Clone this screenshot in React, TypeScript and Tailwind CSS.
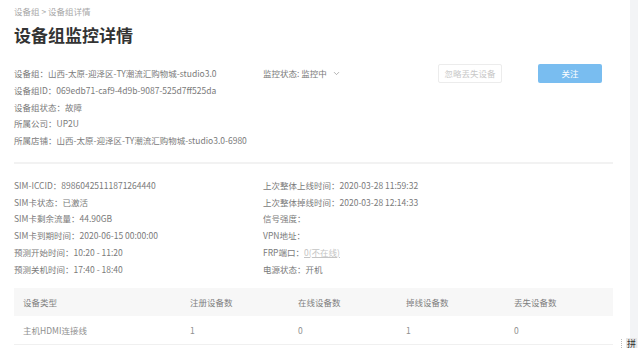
import { ChevronDown } from "lucide-react";

const groupInfo = [
  ["设备组", "山西-太原-迎泽区-TY潮流汇购物城-studio3.0"],
  ["设备组ID", "069edb71-caf9-4d9b-9087-525d7ff525da"],
  ["设备组状态", "故障"],
  ["所属公司", "UP2U"],
  ["所属店铺", "山西-太原-迎泽区-TY潮流汇购物城-studio3.0-6980"],
];

const simInfo = [
  ["SIM-ICCID", "89860425111871264440"],
  ["SIM卡状态", "已激活"],
  ["SIM卡剩余流量", "44.90GB"],
  ["SIM卡到期时间", "2020-06-15 00:00:00"],
  ["预测开始时间", "10:20 - 11:20"],
  ["预测关机时间", "17:40 - 18:40"],
];

const netInfo = [
  ["上次整体上线时间", "2020-03-28 11:59:32"],
  ["上次整体掉线时间", "2020-03-28 12:14:33"],
  ["信号强度", ""],
  ["VPN地址", ""],
  ["FRP端口", "frp"],
  ["电源状态", "开机"],
];

const columns = ["设备类型", "注册设备数", "在线设备数", "掉线设备数", "丢失设备数"];
const rows = [["主机HDMI连接线", "1", "0", "1", "0"]];

function Row({ label, value }: { label: string; value: string }) {
  return (
    <p className="h-[16.75px] leading-[16.75px] whitespace-nowrap">
      {label}：
      {value === "frp" ? (
        <span className="text-[#c4c4c4] underline">0(不在线)</span>
      ) : (
        value
      )}
    </p>
  );
}

export default function App() {
  return (
    <div
      className="relative w-[638px] h-[348px] overflow-hidden flex bg-white text-[8.5px] text-[#7a7a7a]"
      style={{ fontFamily: '"Noto Sans CJK SC", "Noto Sans", sans-serif' }}
    >
      <main className="flex-1 pl-[14px] pr-[17px]">
        <p className="mt-[5px] leading-[12px] text-[#a8a8a8]">设备组 &gt; 设备组详情</p>
        <h1 className="mt-[8px] text-[17px] leading-[20px] font-bold text-[#333]">设备组监控详情</h1>

        <section className="mt-[20px] flex items-start">
          <div className="w-[249px]">
            {groupInfo.map(([l, v]) => (
              <Row key={l} label={l} value={v} />
            ))}
          </div>
          <div className="w-[175px] flex items-center gap-[5px] h-[16.75px] leading-[16.75px] whitespace-nowrap">
            监控状态: 监控中
            <ChevronDown size={9} className="text-[#999]" />
          </div>
          <button className="mt-[-1px] w-[64px] h-[19px] rounded-[2px] border border-[#ececec] bg-white text-[8.5px] text-[#c8c8c8]">
            忽略丢失设备
          </button>
          <button className="mt-[-1px] ml-[36px] w-[64px] h-[19px] rounded-[2px] bg-[#79bdf0] text-[8.5px] text-white">
            关注
          </button>
        </section>

        <div className="mt-[13px] h-[2px] bg-[#f2f2f2]" />

        <section className="mt-[13px] flex">
          <div className="w-[249px]">
            {simInfo.map(([l, v]) => (
              <Row key={l} label={l} value={v} />
            ))}
          </div>
          <div>
            {netInfo.map(([l, v]) => (
              <Row key={l} label={l} value={v} />
            ))}
          </div>
        </section>

        <table className="mt-[11px] w-full table-fixed text-left">
          <colgroup>
            <col className="w-[167px]" />
            <col className="w-[108px]" />
            <col className="w-[108px]" />
            <col className="w-[108px]" />
            <col />
          </colgroup>
          <thead>
            <tr className="h-[28px] bg-[#f7f7f7]">
              {columns.map((c) => (
                <th key={c} className="pl-[9px] font-normal text-[#808080]">
                  {c}
                </th>
              ))}
            </tr>
          </thead>
          <tbody>
            {rows.map((r) => (
              <tr key={r[0]} className="h-[28px] border-b border-[#f0f0f0]">
                {r.map((c, i) => (
                  <td key={i} className="pl-[9px] text-[#8f8f8f]">
                    {c}
                  </td>
                ))}
              </tr>
            ))}
          </tbody>
        </table>
      </main>
      <aside className="w-[8px] bg-[#f3f4f6]" />

      <div className="absolute right-[1px] bottom-0 flex items-end gap-[4px]">
        <span className="h-[9px] border-l border-dotted border-[#bbb]" />
        <span className="w-[11px] h-[10px] flex items-center justify-center bg-[#e6e6e6] text-[9px] leading-none text-[#333]">
          拼
        </span>
      </div>
    </div>
  );
}
